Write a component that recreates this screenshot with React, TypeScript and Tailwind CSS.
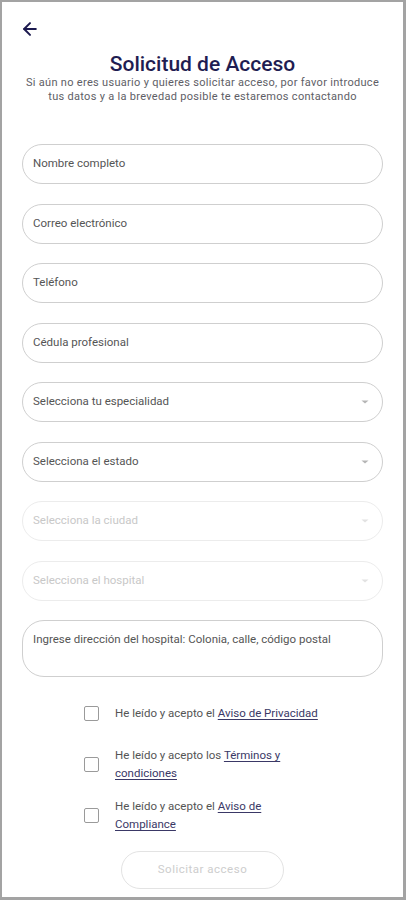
import { ArrowLeft } from "lucide-react";

const textFields = ["Nombre completo", "Correo electrónico", "Teléfono", "Cédula profesional"];

const selects = [
  { label: "Selecciona tu especialidad", disabled: false },
  { label: "Selecciona el estado", disabled: false },
  { label: "Selecciona la ciudad", disabled: true },
  { label: "Selecciona el hospital", disabled: true },
];

function Check({ children }: { children: React.ReactNode }) {
  return (
    <div className="min-h-[36px] flex items-center gap-4">
      <div className="w-[15px] h-[15px] shrink-0 rounded-[2px] border-[1.5px] border-[#9a9a9a]" />
      <p className="w-[205px] text-[11.5px] leading-[18px] text-[#555]">{children}</p>
    </div>
  );
}

function Link({ children }: { children: React.ReactNode }) {
  return <span className="underline text-[#3a3866] underline-offset-2">{children}</span>;
}

export default function App() {
  return (
    <div className="w-[406px] h-[900px] bg-[#a3a3a3] pl-[2px] pt-[2px] pr-[3px] pb-[3px] font-['Roboto',sans-serif]">
      <div className="h-full bg-white flex flex-col">
        {/* Header */}
        <div className="pl-[18px] pt-[17px] h-[20px] box-content">
          <ArrowLeft className="w-[20px] h-[20px] text-[#1c1a4f]" strokeWidth={2.4} />
        </div>
        <h1 className="mt-[11px] text-center text-[21px] leading-[28px] font-medium text-[#1f1d52]">
          Solicitud de Acceso
        </h1>
        <p className="mt-[-2px] px-[18px] text-center text-[11px] tracking-[0.3px] leading-[14px] text-[#5e5e66]">
          Si aún no eres usuario y quieres solicitar acceso, por favor introduce tus datos y a la brevedad
          posible te estaremos contactando
        </p>

        {/* Form */}
        <div className="mt-[40px] px-[20px] flex flex-col gap-[19.5px]">
          {textFields.map((f) => (
            <div
              key={f}
              className="h-[40px] rounded-full border border-[#cfcfcf] flex items-center pl-[10px] text-[11.5px] text-[#555]"
            >
              {f}
            </div>
          ))}
          {selects.map((s) => (
            <div
              key={s.label}
              className={`h-[40px] rounded-full border flex items-center justify-between pl-[10px] pr-[12px] text-[11.5px] ${
                s.disabled ? "border-[#ececec] text-[#c8c8c8]" : "border-[#cfcfcf] text-[#555]"
              }`}
            >
              <span>{s.label}</span>
              <svg width="10" height="6" viewBox="0 0 10 6">
                <path d="M1.5 1.5 L5 4.5 L8.5 1.5 Z" fill={s.disabled ? "#e2e2e2" : "#b5b5b5"} />
              </svg>
            </div>
          ))}
          <div className="h-[57px] rounded-[22px] border border-[#cfcfcf] pl-[10px] pt-[10px] text-[11.5px] text-[#555]">
            Ingrese dirección del hospital: Colonia, calle, código postal
          </div>
        </div>

        {/* Checks */}
        <div className="mt-[18px] flex flex-col items-center gap-[15px] pr-[1px]">
          <Check>
            He leído y acepto el <Link>Aviso de Privacidad</Link>
          </Check>
          <Check>
            He leído y acepto los <Link>Términos y</Link> <Link>condiciones</Link>
          </Check>
          <Check>
            He leído y acepto el <Link>Aviso de</Link> <Link>Compliance</Link>
          </Check>
        </div>

        <div className="mt-[18px] flex justify-center">
          <button className="w-[163px] h-[38px] rounded-full border border-[#e3e3e3] text-[11.5px] tracking-[0.5px] text-[#cdcdcd]">
            Solicitar acceso
          </button>
        </div>
      </div>
    </div>
  );
}
